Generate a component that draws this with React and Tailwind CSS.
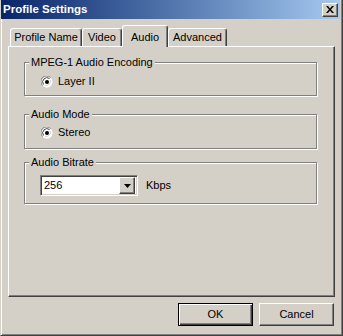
const RAISED =
  "border border-t-white border-l-white border-r-[#404040] border-b-[#404040] shadow-[inset_-1px_-1px_#808080]";

function Tab({ label, width, selected }) {
  if (selected) {
    return (
      <div
        className={`${width} h-[22px] -mb-[1px] relative z-10 bg-[#d4d0c8] flex items-start justify-center pt-[3px] border-t border-l border-r border-t-white border-l-white border-r-[#404040] shadow-[inset_-1px_0_#808080] rounded-t-[3px]`}
      >
        {label}
      </div>
    );
  }
  return (
    <div
      className={`${width} h-[18px] flex items-center justify-center border-t border-l border-r border-t-white border-l-white border-r-[#404040] shadow-[inset_-1px_0_#808080] rounded-t-[3px]`}
    >
      {label}
    </div>
  );
}

function Radio() {
  return (
    <svg width="12" height="12" viewBox="0 0 12 12" className="shrink-0">
      <circle cx="6" cy="6" r="5.5" fill="#ffffff" />
      <path d="M1.5 9.5 A5.5 5.5 0 0 1 9.5 1.5" stroke="#808080" strokeWidth="1" fill="none" />
      <path d="M2.5 8.5 A4.3 4.3 0 0 1 8.5 2.5" stroke="#404040" strokeWidth="1" fill="none" />
      <path d="M10.2 2.8 A5.5 5.5 0 0 1 2.8 10.2" stroke="#ffffff" strokeWidth="1" fill="none" />
      <path d="M9.2 3.8 A4.3 4.3 0 0 1 3.8 9.2" stroke="#d4d0c8" strokeWidth="1" fill="none" />
      <circle cx="6" cy="6" r="2" fill="#000000" />
    </svg>
  );
}

function Group({ title, height, className = "", children }) {
  return (
    <fieldset
      className={`w-[293px] ${height} ${className} m-0 p-0 min-w-0 border border-[#808080] shadow-[1px_1px_0_#ffffff,inset_1px_1px_0_#ffffff]`}
    >
      <legend className="ml-[4px] px-[2px] leading-[13px] bg-[#d4d0c8]">{title}</legend>
      {children}
    </fieldset>
  );
}

export default function App() {
  return (
    <div className="w-[343px] h-[336px] flex flex-col bg-[#d4d0c8] text-black text-[11px] font-['Liberation_Sans',Arial,sans-serif] border-l border-r border-b border-l-[#d4d0c8] border-r-[#404040] border-b-[#404040] shadow-[inset_1px_0_#ffffff,inset_-1px_-1px_#808080] overflow-hidden">
      {/* Title bar */}
      <div className="h-[19px] mr-[2px] flex items-center justify-between bg-gradient-to-r from-[#0a246a] to-[#a6caf0] pl-[2px] pr-[2px]">
        <span className="text-white font-bold text-[11.5px] leading-none">Profile Settings</span>
        <div className={`w-[16px] h-[14px] bg-[#d4d0c8] flex items-center justify-center ${RAISED}`}>
          <svg width="8" height="7" viewBox="0 0 8 7">
            <path d="M0 0h2l2 2.5L6 0h2L5 3.5 8 7H6L4 4.5 2 7H0l3-3.5z" fill="#000000" />
          </svg>
        </div>
      </div>

      {/* Tabs */}
      <div className="mt-[6px] h-[21px] ml-[9px] flex items-end">
        <Tab label="Profile Name" width="w-[72px]" />
        <Tab label="Video" width="w-[40px]" />
        <Tab label="Audio" width="w-[46px]" selected />
        <Tab label="Advanced" width="w-[59px]" />
      </div>

      {/* Tab panel */}
      <div className="ml-[7px] w-[327px] h-[251px] pt-[9px] pl-[15px] border border-t-white border-l-white border-r-[#404040] border-b-[#404040] shadow-[inset_-1px_-1px_#808080]">
        <Group title="MPEG-1 Audio Encoding" height="h-[40px]">
          <div className="mt-[6px] pl-[16px] h-[13px] flex items-center gap-[5px]">
            <Radio />
            <span>Layer II</span>
          </div>
        </Group>

        <Group title="Audio Mode" height="h-[41px]" className="mt-[12px]">
          <div className="mt-[5px] pl-[16px] h-[13px] flex items-center gap-[5px]">
            <Radio />
            <span>Stereo</span>
          </div>
        </Group>

        <Group title="Audio Bitrate" height="h-[48px]" className="mt-[7px]">
          <div className="mt-[6px] pl-[15px] flex items-center">
            <div className="w-[98px] h-[21px] bg-white flex items-center border border-t-[#808080] border-l-[#808080] border-r-white border-b-white shadow-[inset_1px_1px_#404040,inset_-1px_-1px_#d4d0c8] p-[2px]">
              <span className="flex-1 pl-[1px] leading-none">256</span>
              <div className={`w-[16px] h-[17px] bg-[#d4d0c8] flex items-center justify-center ${RAISED}`}>
                <svg width="7" height="4" viewBox="0 0 7 4">
                  <path d="M0 0h7L3.5 4z" fill="#000000" />
                </svg>
              </div>
            </div>
            <span className="ml-[8px]">Kbps</span>
          </div>
        </Group>
      </div>

      {/* Buttons */}
      <div className="mt-[6px] pr-[8px] flex justify-end gap-[6px]">
        <button className="w-[75px] h-[23px] bg-[#d4d0c8] border border-black shadow-[inset_1px_1px_#ffffff,inset_-1px_-1px_#404040,inset_-2px_-2px_#808080]">
          OK
        </button>
        <button className={`w-[75px] h-[23px] bg-[#d4d0c8] ${RAISED}`}>Cancel</button>
      </div>
    </div>
  );
}
